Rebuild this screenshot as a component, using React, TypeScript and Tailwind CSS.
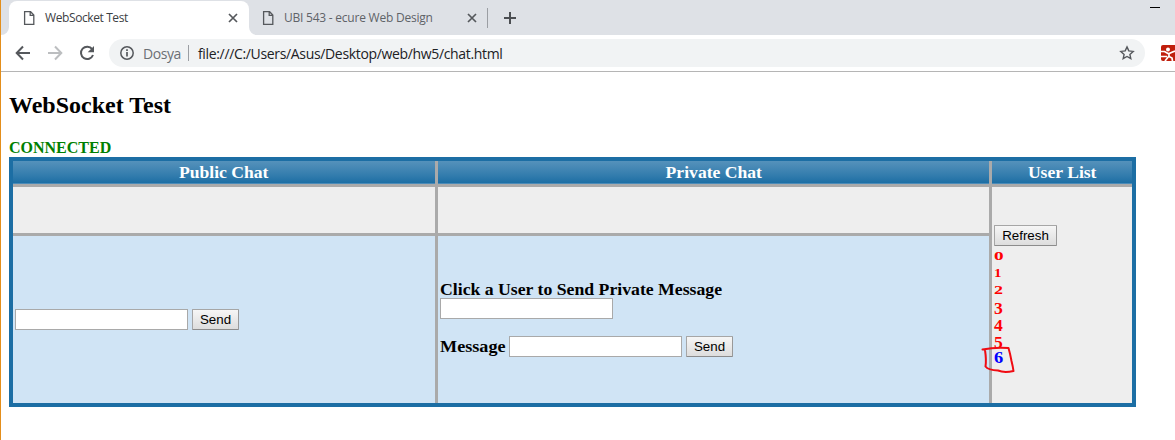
import type { ReactNode } from "react";

function FileIcon() {
  return (
    <svg width="16" height="16" viewBox="0 0 16 16" fill="none" stroke="#55585c" strokeWidth="1.3" className="shrink-0">
      <path d="M3.6 1.7h6l3.2 3.3v9.3H3.6zM9.2 1.7v3.7h3.6" />
    </svg>
  );
}

function CloseIcon() {
  return (
    <svg width="10" height="10" viewBox="0 0 10 10" stroke="#55585c" strokeWidth="1.7" className="shrink-0">
      <path d="M1 1l8 8M9 1l-8 8" />
    </svg>
  );
}

function TabStrip() {
  return (
    <div className="flex h-[35px] bg-[#dee1e6] pl-2 font-['Open_Sans',sans-serif] text-[12px]">
      <div className="relative mt-px flex h-[34px] w-[240px] items-center rounded-t-lg bg-white pr-[11px] pl-[12px] text-[#3c4043]">
        <FileIcon />
        <span className="ml-[8px] flex-1 tracking-[-0.4px] whitespace-nowrap">WebSocket Test</span>
        <CloseIcon />
        <svg className="absolute bottom-0 -left-2" width="8" height="8" fill="#fff">
          <path d="M8 0v8H0a8 8 0 0 0 8-8" />
        </svg>
        <svg className="absolute -right-2 bottom-0" width="8" height="8" fill="#fff">
          <path d="M0 0v8h8a8 8 0 0 1-8-8" />
        </svg>
      </div>
      <div className="mt-px flex h-[34px] w-[228px] items-center pl-[11px] text-[#5f6368]">
        <FileIcon />
        <span className="ml-[8px] w-[183px] tracking-[-0.23px] whitespace-nowrap">UBI 543 - ecure Web Design</span>
        <CloseIcon />
      </div>
      <div className="mt-[8px] ml-[10px] h-[20px] w-px bg-[#9b9ea3]" />
      <svg className="mt-[12px] ml-[16px]" width="12" height="12" stroke="#4b4e52" strokeWidth="2">
        <path d="M6 0v12M0 6h12" />
      </svg>
      <div className="mt-[7px] mr-[15px] ml-auto h-px w-[10px] bg-black" />
    </div>
  );
}

function Toolbar() {
  return (
    <div className="flex h-[37px] items-start border-b border-[#b5b5b5] bg-white pt-[4px] font-['Open_Sans',sans-serif] text-[14px]">
      <div className="flex h-[28px] w-[108px] shrink-0 items-center pl-[14px]">
        <svg width="16" height="16" viewBox="0 0 16 16" fill="none" stroke="#55585c" strokeWidth="2">
          <path d="M15 8H2M8 1.5L1.7 8 8 14.5" />
        </svg>
        <svg className="ml-[16px]" width="16" height="16" viewBox="0 0 16 16" fill="none" stroke="#bcbec0" strokeWidth="2">
          <path d="M1 8h13M8 1.5L14.3 8 8 14.5" />
        </svg>
        <svg className="ml-[16px]" width="16" height="16" viewBox="0 0 16 16" fill="none">
          <path d="M13.2 4.2A6.2 6.2 0 1 0 14 10" stroke="#55585c" strokeWidth="2" />
          <path d="M15 1v6.3H8.7z" fill="#55585c" />
        </svg>
      </div>
      <div className="flex h-[28px] w-[1036px] shrink-0 items-center rounded-full bg-[#f1f3f4] pr-[10px] pl-[11px]">
        <svg width="14" height="14" viewBox="0 0 14 14" fill="none" stroke="#55585c">
          <circle cx="7" cy="7" r="6.2" strokeWidth="1.5" />
          <path d="M7 6v4.5M7 3.3v1.6" strokeWidth="1.7" />
        </svg>
        <span className="ml-[9px] w-[45px] tracking-[-0.45px] text-[#6b6f74]">Dosya</span>
        <span className="h-[16px] w-px bg-[#9b9ea3]" />
        <span className="ml-[9px] flex-1 tracking-[-0.34px] whitespace-nowrap text-[#202124]">
          file:///C:/Users/Asus/Desktop/web/hw5/chat.html
        </span>
        <svg width="16" height="16" viewBox="0 0 16 16" fill="none" stroke="#55585c" strokeWidth="1.4">
          <path d="M8 1.9l1.8 4 4.4.5-3.3 3 .9 4.3L8 11.5l-3.8 2.2.9-4.3-3.3-3 4.4-.5z" />
        </svg>
      </div>
      <svg className="mt-[6px] ml-[16px] shrink-0" width="14" height="16" viewBox="0 0 14 16">
        <path d="M0 2a2 2 0 0 1 2-2h12v16H2a2 2 0 0 1-2-2z" fill="#c01e0c" />
        <circle cx="7" cy="4.5" r="2" fill="#fff" />
        <path d="M0 6.5h3.5l4 2.2 3.5-1.5 3-1.2M8 8v3.5l3 1.5.5 3M8 11l-2 2.5-2 2.5M0 11.5h6" stroke="#fff" strokeWidth="1.7" fill="none" />
      </svg>
    </div>
  );
}

function TextField() {
  return <input type="text" className="block h-[21px] w-[173px] shrink-0 border border-[#a9a9a9] bg-white px-px" />;
}

function Button({ children, className }: { children: ReactNode; className: string }) {
  return (
    <button
      className={`h-[21px] shrink-0 rounded-[1px] border border-t-[#a6a6a6] border-r-[#999] border-b-[#8c8c8c] border-l-[#a6a6a6] bg-linear-to-b from-[#f6f6f6] to-[#dddddd] text-center font-['Liberation_Sans',Arial,sans-serif] text-[13.333px] leading-[18px] font-normal text-black ${className}`}
    >
      {children}
    </button>
  );
}

function HeaderCell({ children }: { children: ReactNode }) {
  return (
    <div className="border-b border-[#4b8bb8] bg-linear-to-b from-[#5592bb] via-[#327cad] via-66% to-[#1c6ea4] text-center text-[16px] leading-[23px] text-white">
      <span className="inline-block scale-x-[1.1]">{children}</span>
    </div>
  );
}

const users = [
  { id: "0", style: "text-[#f00]", glyph: "text-[12px] scale-x-160 translate-y-px" },
  { id: "1", style: "text-[#f00]", glyph: "text-[12px] scale-x-125 translate-y-px" },
  { id: "2", style: "text-[#f00]", glyph: "text-[12px] scale-x-150 translate-y-px" },
  { id: "3", style: "text-[#f00]", glyph: "text-[16px] scale-x-110 translate-y-[2px]" },
  { id: "4", style: "text-[#f00]", glyph: "text-[16px] scale-x-110 translate-y-[2px]" },
  { id: "5", style: "text-[#f00]", glyph: "text-[16px] scale-x-110 translate-y-[2px]" },
  { id: "6", style: "text-[#00f]", glyph: "text-[16px] scale-x-115" },
];

function ChatTable() {
  return (
    <div className="grid h-[250px] w-[1127px] grid-cols-[422px_551px_140px] grid-rows-[23px_46px_167px] gap-[3px] border-4 border-[#1c6ea4] bg-[#aaaaaa] font-bold">
      <HeaderCell>Public Chat</HeaderCell>
      <HeaderCell>Private Chat</HeaderCell>
      <HeaderCell>User List</HeaderCell>
      <div className="bg-[#eeeeee]" />
      <div className="bg-[#eeeeee]" />
      <div className="relative row-span-2 bg-[#eeeeee] pt-[38px] pl-[2px]">
        <Button className="block w-[63px]">Refresh</Button>
        <ul className="mt-px">
          {users.map((user) => (
            <li key={user.id} className={`flex h-[17px] ${user.style}`}>
              <span className={`origin-left leading-[17px] ${user.glyph}`}>{user.id}</span>
            </li>
          ))}
        </ul>
        <svg className="absolute top-[158px] -left-[11px]" width="36" height="30" fill="none" stroke="#f00b12" strokeWidth="2" strokeLinecap="round" strokeLinejoin="round">
          <path d="M4 4.500H1.500Q14 2 27.500 3Q29 8 30.500 16Q32 22 32.500 26Q23 28 17 25.500Q7 25 4.500 21.500Q5.500 15 4 5" />
        </svg>
      </div>
      <div className="flex items-center gap-[4px] bg-[#d0e4f5] pl-[2px]">
        <TextField />
        <Button className="w-[47px]">Send</Button>
      </div>
      <div className="bg-[#d0e4f5] pt-[45px] pl-[2px] text-[16px] leading-[17px] text-black">
        <div className="origin-left scale-x-[1.107] whitespace-nowrap">Click a User to Send Private Message</div>
        <TextField />
        <div className="mt-[17px] flex items-center">
          <span className="w-[69px] origin-left scale-x-[1.135]">Message</span>
          <TextField />
          <Button className="ml-[4px] w-[47px]">Send</Button>
        </div>
      </div>
    </div>
  );
}

export default function App() {
  return (
    <div className="h-[440px] w-[1175px] overflow-hidden border-l border-[#e38e1b] bg-white">
      <TabStrip />
      <Toolbar />
      <main className="pl-[8px] font-['Liberation_Serif','Times_New_Roman',serif] text-black">
        <h2 className="pt-[19px] text-[24px] leading-[28px] font-bold">WebSocket Test</h2>
        <div className="mt-[20px] h-[18px] text-[16px] leading-[18px] font-bold text-[#008000]">CONNECTED</div>
        <ChatTable />
      </main>
    </div>
  );
}
